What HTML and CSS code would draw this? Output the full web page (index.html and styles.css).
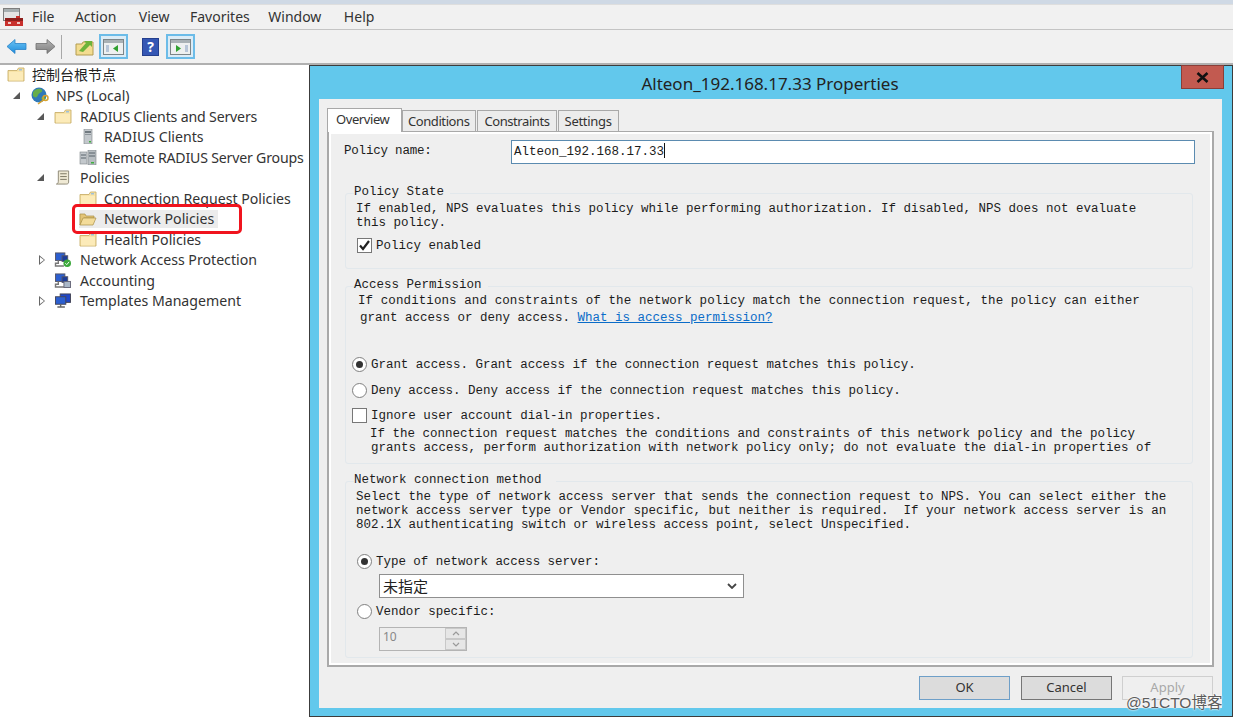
FILE: index.html
```html
<!DOCTYPE html>
<html lang="en">
<head>
<meta charset="utf-8">
<title>NPS</title>
<link rel="stylesheet" href="styles.css">
</head>
<body>
<svg class="defs" width="0" height="0"><defs>
  <g id="folder"><path d="M1 3.500h9l1.500-2.500h5.500v13H1z" fill="#f8e3a6" stroke="#c9b06c" stroke-width=".9"/><rect x="2" y="5" width="14" height="8.500" fill="#fcebb9"/><rect x="12" y="2" width="3" height="1.500" fill="#9fc0d8"/></g>
  <linearGradient id="blue" x1="0" y1="0" x2="0" y2="1"><stop offset="0" stop-color="#6cc4f4"/><stop offset="1" stop-color="#1f8cdc"/></linearGradient>
  <linearGradient id="gray" x1="0" y1="0" x2="0" y2="1"><stop offset="0" stop-color="#b4b4b4"/><stop offset="1" stop-color="#7e7e7e"/></linearGradient>
</defs></svg>
<div class="app">
  <div class="strip"></div>
  <div class="menubar">
    <svg class="appicon" viewBox="0 0 22 20"><rect x="1.500" y="1.500" width="16" height="12" fill="#e4e4e4" stroke="#7d7d7d"/><rect x="2" y="2" width="15" height="3" fill="#a6aeb0"/><path d="M9 11h5v-2h4v2h3v8H3v-8z" fill="#c8302c"/><rect x="3" y="11" width="18" height="3" fill="#8e1f1c"/><rect x="6" y="15" width="3" height="2" fill="#f3c8c4"/><rect x="15" y="15" width="3" height="2" fill="#f3c8c4"/></svg>
    <span class="m">File</span><span class="m m-action">Action</span><span class="m">View</span><span class="m m-fav">Favorites</span><span class="m m-win">Window</span><span class="m">Help</span>
  </div>
  <div class="toolbar">
    <svg class="tb" viewBox="0 0 21 17"><path d="M1 8.500 9 1.500v4h11v6H9v4z" fill="url(#blue)" stroke="#2a83c8" stroke-width=".8"/></svg>
    <svg class="tb" viewBox="0 0 21 17"><path d="M20 8.500 12 1.500v4H1v6h11v4z" fill="url(#gray)" stroke="#6e6e6e" stroke-width=".8"/></svg>
    <span class="sep"></span>
    <svg class="up" viewBox="0 0 19 18"><path d="M1 6h6l1-2h10v13H1z" fill="#f3dc90" stroke="#b39c50"/><path d="M4 13 11 5 9 3h8v6l-2-2-7 7z" fill="#6db33a"/></svg>
    <span class="tbtn"><svg viewBox="0 0 21 16"><rect x=".5" y=".5" width="20" height="15" fill="#eef0f0" stroke="#7d8588"/><rect x="1" y="1" width="19" height="3" fill="#a9b1b5"/><rect x="3" y="6" width="3" height="7" fill="#b8c6d8"/><path d="M15 6v7l-5-3.500z" fill="#30a030"/></svg></span>
    <span class="help">?</span>
    <span class="tbtn"><svg viewBox="0 0 21 16"><rect x=".5" y=".5" width="20" height="15" fill="#eef0f0" stroke="#7d8588"/><rect x="1" y="1" width="19" height="3" fill="#a9b1b5"/><rect x="15" y="6" width="3" height="7" fill="#b8c6d8"/><path d="M6 6v7l5-3.500z" fill="#30a030"/></svg></span>
  </div>
  <ul class="tree">
    <li class="n l0"><svg class="ic" viewBox="0 0 18 15"><use href="#folder"/></svg><span class="zh">控制台根节点</span></li>
    <li class="n l1"><span class="open"></span><svg class="big" viewBox="0 0 20 18"><circle cx="9" cy="8" r="7.500" fill="#2f79b8"/><path d="M3 5c3-4 8-4 9-2 1 3-3 2-4 5s-3 3-5 1zM11 11l3-2 2 3-3 2z" fill="#65ad4a"/><circle cx="15.500" cy="11" r="2.500" fill="none" stroke="#d9a32e" stroke-width="1.500"/><path d="M13.500 13 8 17" stroke="#d9a32e" stroke-width="1.500"/></svg><span>NPS (Local)</span></li>
    <li class="n l2"><span class="open"></span><svg class="ic" viewBox="0 0 18 15"><use href="#folder"/></svg><span class="narrow">RADIUS Clients and Servers</span></li>
    <li class="n l3"><svg class="ic" viewBox="0 0 18 15"><rect x="5" y="0" width="8" height="15" fill="#c3c8cc" stroke="#7d8488" stroke-width=".6"/><rect x="6" y="2" width="6" height="2" fill="#717a80"/><rect x="6" y="5" width="6" height="1" fill="#8d959a"/><rect x="10" y="12" width="2" height="1.500" fill="#3faf3f"/></svg><span>RADIUS Clients</span></li>
    <li class="n l3"><svg class="ic" viewBox="0 0 18 15"><rect x="1" y="2" width="7" height="12" fill="#c3c8cc" stroke="#7d8488" stroke-width=".6"/><rect x="9" y="0" width="8" height="15" fill="#b7bdc1" stroke="#7d8488" stroke-width=".6"/><path d="M2 5h5M10 3h6M2 8h5M10 6h6" stroke="#59626a"/><rect x="12" y="12" width="3" height="1.500" fill="#3faf3f"/></svg><span class="narrower">Remote RADIUS Server Groups</span></li>
    <li class="n l2"><span class="open"></span><svg class="ic" viewBox="0 0 18 16"><path d="M4 1h11v12c0 2-2 2-3 2H2c2-1 2-2 2-3z" fill="#efe9d4" stroke="#8c8674"/><path d="M6 4h7M6 7h7M6 10h7" stroke="#77725f"/></svg><span>Policies</span></li>
    <li class="n l3"><svg class="ic" viewBox="0 0 18 15"><use href="#folder"/></svg><span>Connection Request Policies</span></li>
    <li class="n l3 sel-row"><span class="sel"><svg class="ic" viewBox="0 0 18 15"><path d="M1 14V3h5l1 2h8v2H5z" fill="#e3c578" stroke="#a98f46" stroke-width=".7"/><path d="M1 14 4 7h13l-3 7z" fill="#f3dc9a" stroke="#a98f46" stroke-width=".7"/></svg><span>Network Policies</span></span><span class="mark"></span></li>
    <li class="n l3"><svg class="ic" viewBox="0 0 18 15"><use href="#folder"/></svg><span>Health Policies</span></li>
    <li class="n l2c"><span class="closed"></span><svg class="ic" viewBox="0 0 18 16"><rect x="1" y="1" width="10" height="8" fill="#2c5fd0" stroke="#556"/><rect x="8" y="4" width="6" height="6" fill="#1b3c9a" stroke="#556"/><path d="M4 9v3H1v3h9" fill="none" stroke="#777" stroke-width="1.500"/><circle cx="13.500" cy="12" r="4" fill="#3ca83c"/><path d="M11.500 12l1.500 1.500 2.500-3" stroke="#fff" fill="none"/></svg><span>Network Access Protection</span></li>
    <li class="n l2x"><svg class="ic" viewBox="0 0 18 16"><rect x="1" y="1" width="10" height="8" fill="#2c5fd0" stroke="#556"/><rect x="8" y="4" width="6" height="6" fill="#1b3c9a" stroke="#556"/><path d="M4 9v3H1v3h9" fill="none" stroke="#777" stroke-width="1.500"/><rect x="10" y="9" width="7" height="6.500" fill="#aab8c8" stroke="#667"/></svg><span>Accounting</span></li>
    <li class="n l2c"><span class="closed"></span><svg class="ic" viewBox="0 0 18 16"><rect x="6" y="1" width="11" height="9" fill="#1f47c8" stroke="#445"/><rect x="1" y="4" width="11" height="8" fill="#2c5fd0" stroke="#445"/><path d="M3 15h8M6.500 12v3" stroke="#666" stroke-width="1.500"/></svg><span>Templates Management</span></li>
  </ul>
</div>

<section class="dialog">
  <header class="title">Alteon_192.168.17.33 Properties<span class="close"><svg viewBox="0 0 13 11"><path d="M1.500 1 11.500 10M11.500 1 1.500 10" stroke="#111" stroke-width="2.600"/></svg></span></header>
  <div class="client">
    <div class="tabs">
      <span class="tab active">Overview</span><span class="tab">Conditions</span><span class="tab t-con">Constraints</span><span class="tab t-set">Settings</span>
    </div>
    <div class="page">
      <div class="namerow"><span class="t namelbl">Policy name:</span><div class="nameinput t">Alteon_192.168.17.33<i class="caret"></i></div></div>

      <div class="grp g1">
        <div class="legend t">Policy State</div>
        <p class="t">If enabled, NPS evaluates this policy while performing authorization. If disabled, NPS does not evaluate<br>this policy.</p>
        <div class="opt chk-row"><span class="chk"><svg viewBox="0 0 13 13"><path d="M2 6.500 5 10l6-8" fill="none" stroke="#222" stroke-width="2.200"/></svg></span><span class="t">Policy enabled</span></div>
      </div>

      <div class="grp g2">
        <div class="legend t">Access Permission</div>
        <p class="t"><span class="wide">If conditions and constraints of the network policy match the connection request, the policy can either</span><br><span class="nudge">grant access or deny access. <a class="link">What is access permission?</a></span></p>
        <div class="opt grant"><span class="radio on"></span><span class="t snug">Grant access. Grant access if the connection request matches this policy.</span></div>
        <div class="opt deny"><span class="radio"></span><span class="t snug">Deny access. Deny access if the connection request matches this policy.</span></div>
        <div class="opt ign"><span class="chk"></span><span class="t snug">Ignore user account dial-in properties.</span></div>
        <p class="t indent">If the connection request matches the conditions and constraints of this network policy and the policy<br><span class="nudge1">grants access, perform authorization with network policy only; do not evaluate the dial-in properties of</span></p>
      </div>

      <div class="grp g3">
        <div class="legend t">Network connection method</div>
        <p class="t">Select the type of network access server that sends the connection request to NPS. You can select either the<br>network access server type or Vendor specific, but neither is required.&nbsp; If your network access server is an<br>802.1X authenticating switch or wireless access point, select Unspecified.</p>
        <div class="opt type"><span class="radio on"></span><span class="t snug">Type of network access server:</span></div>
        <div class="combo"><span>未指定</span><svg viewBox="0 0 10 6"><path d="M1 1l4 4 4-4" fill="none" stroke="#444" stroke-width="1.800"/></svg></div>
        <div class="opt vendor"><span class="radio"></span><span class="t snug">Vendor specific:</span></div>
        <div class="spin"><span>10</span><span class="arrows"><i><svg viewBox="0 0 8 5"><path d="M1 4l3-3 3 3" fill="none" stroke="#999" stroke-width="1.200"/></svg></i><i><svg viewBox="0 0 8 5"><path d="M1 1l3 3 3-3" fill="none" stroke="#999" stroke-width="1.200"/></svg></i></span></div>
      </div>
    </div>
    <div class="buttons">
      <span class="btn ok">OK</span><span class="btn cancel">Cancel</span><span class="btn apply">Apply</span>
    </div>
  </div>
</section>
<span class="wm">@51CTO博客</span>
</body>
</html>
```
FILE: styles.css
```css
* { box-sizing: border-box; }
html, body { margin: 0; padding: 0; }
body { width: 1233px; height: 718px; overflow: hidden; position: relative; background: #fff; font-family: "Noto Sans", "Open Sans", sans-serif; color: #222; }
.defs { position: absolute; }
.app { display: flex; flex-direction: column; height: 718px; }
.strip { height: 5px; background: #cfd9e5; border-bottom: 1px solid #dedede; }
.menubar { height: 25px; background: #f1f1f1; display: flex; align-items: center; padding: 0 0 2px 2px; font-size: 14px; color: #333; border-bottom: 1px solid #c4c4c4; }
.appicon { width: 22px; height: 20px; margin: 2px 8px 0 0; }
.m { margin-right: 20.500px; }
.m-action { margin-right: 22.500px; }
.m-fav { margin-right: 18.500px; }
.m-win { margin-right: 22.500px; }
.toolbar { height: 35px; background: #f1f1f1; display: flex; align-items: center; padding-left: 6px; border-bottom: 2px solid #b0b0b0; flex: none; }
.tb { width: 21px; height: 17px; margin-right: 8px; }
.sep { width: 1px; height: 24px; background: #a8a8a8; margin: 0 13px 0 -3px; }
.up { width: 19px; height: 18px; margin-right: 5px; }
.tbtn { width: 29px; height: 25px; background: #dcecf6; border: 2px solid #6cbce8; display: flex; align-items: center; justify-content: center; }
.tbtn svg { width: 21px; height: 16px; }
.help { width: 17px; height: 18px; margin: 0 7px 0 14px; background: #3557b4; border: 1px solid #25408e; color: #fff; font-weight: 700; font-size: 14px; line-height: 16px; text-align: center; }
.tree { list-style: none; margin: 0; padding: 0; width: 309px; flex: 1; background: #fff; font-size: 14.150px; color: #333; }
.n { height: 20.500px; display: flex; align-items: center; position: relative; white-space: nowrap; }
.ic { width: 18px; height: 15px; flex: none; margin-right: 7px; }
.big { width: 20px; height: 18px; flex: none; margin-right: 6px; }
.l0 { padding: 0 0 2px 7px; }
.l1 { padding-left: 13px; }
.l2 { padding-left: 37px; }
.l2 .ic, .l2c .ic, .l2x .ic { margin-right: 8px; }
.l2c { padding-left: 39px; }
.l2x { padding-left: 54px; }
.l3 { padding-left: 79px; }
.narrow { letter-spacing: -.17px; }
.narrower { letter-spacing: -.2px; }
.open, .closed { flex: none; width: 0; height: 0; }
.open { border-style: solid; border-width: 0 0 7px 7px; border-color: transparent transparent #585858 transparent; margin-right: 10px; }
.closed { border-style: solid; border-width: 5px 0 5px 6px; border-color: transparent transparent transparent #666; margin-right: 9px; position: relative; }
.closed::after { content: ""; position: absolute; left: -5px; top: -3px; border-style: solid; border-width: 3px 0 3px 4px; border-color: transparent transparent transparent #fff; }
.zh { font-family: "Noto Sans CJK SC", sans-serif; font-size: 14px; color: #222; }
.sel { display: flex; align-items: center; background: #ececec; padding-right: 4px; height: 18px; }
.mark { position: absolute; left: 72px; top: -5px; width: 170px; height: 30px; border: 3px solid #f0141e; border-radius: 5px; }
.sel-row { z-index: 1; }

.dialog { position: absolute; left: 309px; top: 65px; width: 924px; height: 652px; background: #62c8ec; border: 1px solid #3c3c3c; display: flex; flex-direction: column; }
.title { height: 33px; flex: none; text-align: center; font-size: 17px; line-height: 35px; color: #222; padding-right: 2px; position: relative; }
.close { position: absolute; right: 8px; top: -1px; width: 43px; height: 24px; background: #c25a50; border: 1px solid #8a3e38; display: flex; align-items: center; justify-content: center; }
.close svg { width: 13px; height: 11px; }
.client { margin: 0 10px 8px 9px; flex: 1; background: #efefef; padding: 9px 0 0 8px; display: flex; flex-direction: column; min-height: 0; }
.tabs { display: flex; height: 23px; align-items: flex-end; font-size: 13px; color: #333; position: relative; z-index: 1; flex: none; }
.tab { height: 21px; line-height: 20px; padding: 0 6px 0 5px; background: #ececec; border: 1px solid #a8a8a8; border-bottom: 0; letter-spacing: -.42px; }
.t-con { padding-left: 6px; margin-left: 1px; }
.t-set { padding: 0 6px 0 6px; margin-left: 1px; letter-spacing: -.3px; }
.active { height: 24px; background: #fff; padding: 0 8px; line-height: 20px; position: relative; top: 1px; width: 75px; }
.page { height: 536px; width: 887px; flex: none; border: 2px solid #a9a9a9; border-top-width: 1px; box-shadow: inset 0 0 0 2px #fff; background: #efefef; padding: 8px 0 0 15px; }
.t { font-family: "Liberation Mono", monospace; font-size: 12.500px; color: #1c1c1c; white-space: nowrap; line-height: 14px; }
.namerow { display: flex; align-items: center; height: 24px; margin-bottom: 29px; }
.namelbl { width: 167px; letter-spacing: -.2px; margin-top: -2px; }
.nameinput { width: 684px; height: 24px; background: #fff; border: 1px solid #5b8bb0; padding: 2px 0 0 2px; }
.caret { display: inline-block; width: 1px; height: 15px; background: #111; vertical-align: -3px; }
.grp { margin: 0 0 17px 1px; width: 848px; border: 1px solid #e2e8ec; border-radius: 3px; }
.legend { margin: -9px 0 0 8px; width: fit-content; background: #efefef; padding-right: 6px; }
.g3 .legend { padding-right: 14px; }
.grp p { margin: 0; line-height: 14px; }
.g1 { height: 76px; }
.g2 { height: 178px; }
.g3 { height: 177px; margin-bottom: 0; }
.g1 p { margin: 3px 0 0 10px; }
.g2 > p:first-of-type { margin: 1px 0 0 12px; line-height: 17px; }
.g3 p { margin: 3px 0 0 10px; }
.wide { letter-spacing: .09px; }
.snug { letter-spacing: -.04px; }
.nudge { margin-left: 2px; }
.nudge1 { margin-left: 1px; }
.opt { display: flex; align-items: center; height: 16px; }
.chk { width: 15px; height: 15px; border: 1px solid #777; background: #fff; margin: -2px 4px 0 0; flex: none; display: block; }
.chk svg { display: block; width: 13px; height: 13px; }
.radio { width: 15px; height: 15px; border: 1px solid #808080; border-radius: 50%; background: #fff; margin: -2px 4px 0 0; flex: none; position: relative; }
.radio.on::after { content: ""; position: absolute; left: 3px; top: 3px; width: 7px; height: 7px; border-radius: 50%; background: #333; }
.chk-row { margin: 8px 0 0 11px; }
.link { color: #0a6cc8; text-decoration: underline; }
.grant { margin: 30px 0 0 6px; }
.deny { margin: 10px 0 0 6px; }
.ign { margin: 9px 0 0 6px; }
.g2 .indent { margin: 3px 0 0 24px; line-height: 14px; }
.type { margin: 22px 0 0 11px; }
.combo { margin: 4px 0 0 33px; width: 365px; height: 24px; background: #fff; border: 1px solid #8f8f8f; display: flex; align-items: center; justify-content: space-between; padding: 0 6px 2px 3px; font-family: "Noto Sans CJK SC", sans-serif; font-size: 15px; color: #222; }
.combo svg { width: 10px; height: 6px; margin-top: 2px; }
.vendor { margin: 6px 0 0 11px; }
.spin { margin: 7px 0 0 33px; width: 88px; height: 24px; border: 1px solid #b4b4b4; display: flex; justify-content: space-between; font-size: 12px; color: #888; padding-left: 3px; line-height: 17px; background: #ededed; }
.arrows { width: 21px; display: flex; flex-direction: column; }
.arrows i { flex: 1; display: flex; align-items: center; justify-content: center; background: #e6e6e6; border: 1px solid #c8c8c8; }
.arrows svg { width: 8px; height: 5px; }
.buttons { display: flex; justify-content: flex-end; gap: 10px; padding: 9px 9px 0 0; }
.btn { width: 91px; height: 24px; border: 1px solid #888; background: #dcdcdc; font-size: 13px; color: #333; text-align: center; line-height: 21px; }
.ok { border: 1px solid #6e9fc8; margin-right: 1px; }
.cancel { border: 1px solid #767676; }
.apply { background: #efefef; border-color: #cfcfcf; color: #a8a8a8; }
.wm { position: absolute; left: 1126px; top: 690px; font-size: 15.500px; color: #5c5c5c; text-shadow: 0 0 2px #fff, 0 0 2px #fff; font-family: "Liberation Sans", "Noto Sans CJK SC", sans-serif; white-space: nowrap; }
```
